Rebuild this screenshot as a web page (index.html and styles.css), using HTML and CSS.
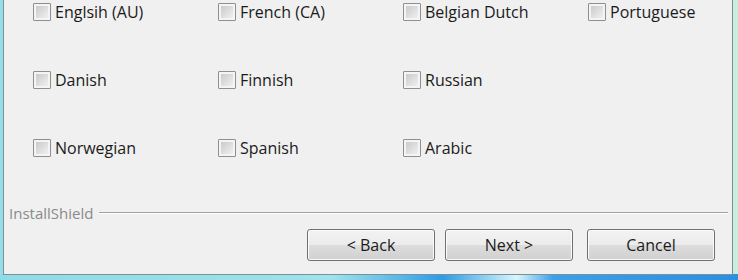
FILE: index.html
```html
<!DOCTYPE html>
<html lang="en">
<head>
  <meta charset="UTF-8">
  <title>InstallShield Wizard - Languages</title>
  <link rel="stylesheet" href="styles.css">
</head>
<body>

  <div class="window">
    <div class="options">
      <label class="opt"><span class="box"></span>Englsih (AU)</label>
      <label class="opt"><span class="box"></span>French (CA)</label>
      <label class="opt"><span class="box"></span>Belgian Dutch</label>
      <label class="opt"><span class="box"></span>Portuguese</label>

      <label class="opt"><span class="box"></span>Danish</label>
      <label class="opt"><span class="box"></span>Finnish</label>
      <label class="opt"><span class="box"></span>Russian</label>
      <span></span>

      <label class="opt"><span class="box"></span>Norwegian</label>
      <label class="opt"><span class="box"></span>Spanish</label>
      <label class="opt"><span class="box"></span>Arabic</label>
      <span></span>
    </div>

    <div class="brand">
      <span>InstallShield</span>
      <span class="rule"></span>
    </div>

    <div class="buttons">
      <button type="button">&lt; Back</button>
      <button type="button">Next &gt;</button>
      <button type="button" class="cancel">Cancel</button>
    </div>
  </div>

</body>
</html>
```

FILE: styles.css
```css
html, body {
  margin: 0;
  width: 738px;
  height: 280px;
  overflow: hidden;
}
body {
  font-family: "Open Sans", "Liberation Sans", sans-serif;
  font-size: 16px;
  color: #1b1b1b;
  background:
    linear-gradient(90deg, #8fdbe6 0%, #9fe2ea 45%, #2f9be3 60%, #d8f6fb 70%, #3d9fe6 75%, #2d8fe0 100%) bottom / 100% 6px no-repeat,
    linear-gradient(90deg, #95dde7 0%, #b4e8ee 60%, #c9eedc 100%);
}

.window {
  box-sizing: border-box;
  height: 275px;
  margin: 0 5px 0 3px;
  background: #f0f0f0;
  border: 1px solid #7f8f95;
  border-top: none;
}

.options {
  display: grid;
  grid-template-columns: repeat(4, 185px);
  grid-auto-rows: 18px;
  row-gap: 50px;
  padding: 3px 0 0 29px;
}
.opt {
  display: flex;
  align-items: center;
  gap: 4px;
  white-space: nowrap;
}
.box {
  box-sizing: border-box;
  width: 18px;
  height: 18px;
  flex: none;
  border: 1px solid #8e8f8f;
  border-radius: 1px;
  box-shadow: inset 0 0 0 2px #f4f4f4;
  background: linear-gradient(135deg, #c4c4c4, #f6f6f6);
}

.brand {
  display: flex;
  align-items: center;
  margin-top: 46px;
  padding: 0 4px 0 5px;
  color: #8a8a8a;
  font-size: 15px;
}
.rule {
  flex: 1;
  margin-left: 6px;
  border-top: 1px solid #a0a0a0;
  border-bottom: 1px solid #fff;
}

.buttons {
  display: flex;
  justify-content: flex-end;
  gap: 10px;
  margin-top: 6px;
  padding-right: 17px;
}
button {
  width: 128px;
  height: 32px;
  padding: 0;
  font: inherit;
  color: #1b1b1b;
  border: 1px solid #707070;
  border-radius: 3px;
  box-shadow: inset 0 0 0 1px #fbfbfb;
  background: linear-gradient(#f3f3f3 0%, #ebebeb 50%, #dddddd 50%, #d0d0d0 100%);
}
.cancel { margin-left: 4px; }
```
